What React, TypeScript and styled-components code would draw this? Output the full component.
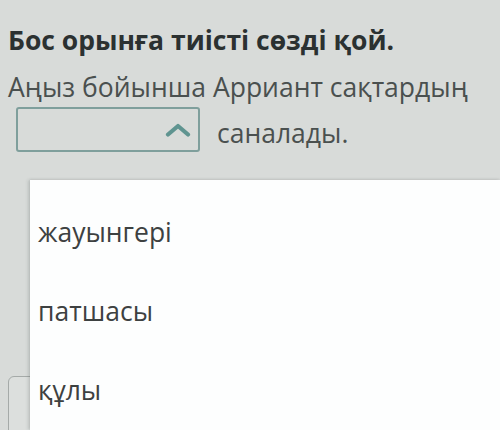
import React from "react";
import styled, { createGlobalStyle } from "styled-components";

const Global = createGlobalStyle`
  html, body { margin: 0; padding: 0; background: #d8dbd9; }
  body { font-family: "Open Sans", "Noto Sans", sans-serif; overflow: hidden; }
`;

const Page = styled.div`
  position: relative;
  width: 500px;
  height: 430px;
  overflow: hidden;
  padding: 23px 8px 0 8px;
  box-sizing: border-box;
  background: #d8dbd9;
`;

const Title = styled.h1`
  margin: 0;
  font-size: 26.5px;
  line-height: 34px;
  font-weight: 700;
  color: #2b3131;
  white-space: nowrap;
`;

const Sentence = styled.div`
  margin-top: 7px;
  font-size: 26.5px;
  line-height: 46px;
  color: #4a504f;
  white-space: nowrap;
`;

const Line = styled.div`
  display: flex;
  align-items: flex-start;
  gap: 17px;
`;

const SelectBox = styled.div`
  margin: -3px 0 0 8px;
  width: 184px;
  height: 45px;
  box-sizing: border-box;
  border: 2px solid #7f9f9c;
  border-radius: 3px;
  display: flex;
  align-items: center;
  justify-content: flex-end;
  padding-right: 7px;
`;

const Card = styled.div`
  margin-top: 220px;
  height: 80px;
  border: 1px solid #a5aaa8;
  border-radius: 6px;
  background: #dcdfdd;
`;

const Menu = styled.ul`
  position: absolute;
  left: 30px;
  top: 180px;
  right: 0;
  bottom: 0;
  margin: 0;
  padding: 13px 0 0 8px;
  list-style: none;
  background: #fdfefe;
  box-shadow: -2px 0 3px rgba(60, 70, 70, 0.18), 0 -1px 2px rgba(60, 70, 70, 0.08);
`;

const Option = styled.li`
  height: 79px;
  line-height: 79px;
  font-size: 26.5px;
  color: #3d4141;
`;

const options = ["жауынгері", "патшасы", "құлы"];

export default function App() {
  return (
    <Page>
      <Global />
      <Title>Бос орынға тиісті сөзді қой.</Title>
      <Sentence>
        <div>Аңыз бойынша Арриант сақтардың</div>
        <Line>
          <SelectBox>
            <svg width="26" height="14" viewBox="0 0 26 14">
              <path d="M3 11.5 L13 3 L23 11.5" fill="none" stroke="#5f9490" strokeWidth="4.2" strokeLinecap="round" strokeLinejoin="round" />
            </svg>
          </SelectBox>
          <span>саналады.</span>
        </Line>
      </Sentence>
      <Card />
      <Menu>
        {options.map((o) => (
          <Option key={o}>{o}</Option>
        ))}
      </Menu>
    </Page>
  );
}
